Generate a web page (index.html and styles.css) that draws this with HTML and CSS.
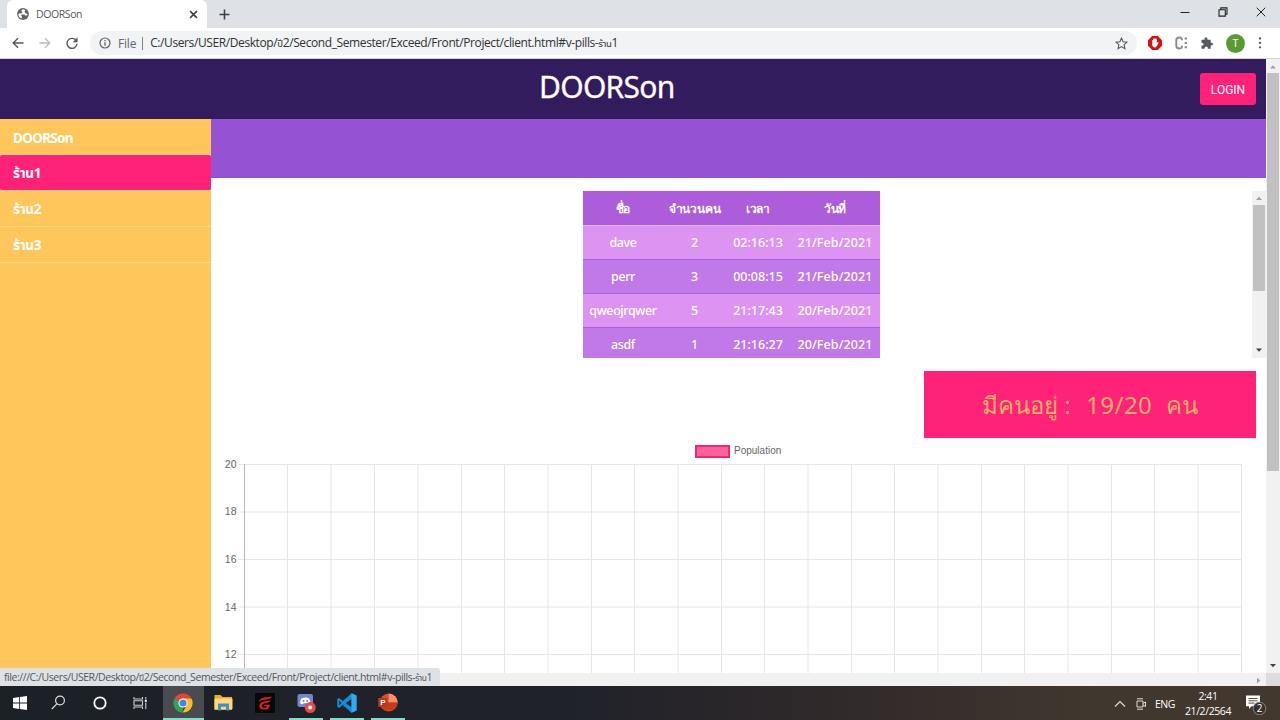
FILE: index.html
```html
<!DOCTYPE html>
<html lang="th">
<head>
<meta charset="utf-8">
<title>DOORSon</title>
<link rel="stylesheet" href="styles.css">
</head>
<body>
<div class="screen">
  <div class="tabstrip">
    <div class="tab">
      <svg class="globe" width="12" height="12" viewBox="0 0 12 12"><circle cx="6" cy="6" r="5.9" fill="#5f6368"/><path d="M6.6 1.2 5 1.6 4.3 3.2l1.2 1-.8 1.2-2-.2L1.3 6c0 2 1.2 3.800 3.200 4.500L5 8.800 4 7.600l.8-1.200h2.300l1.400 1.400 1.300-.3.9-1.500-2-.8L7.500 3.800l.9-1.600z" fill="#fff"/></svg>
      <span class="tab-title">DOORSon</span>
      <svg width="9" height="9" viewBox="0 0 8 8"><path d="M1 1l6 6M7 1L1 7" stroke="#3c4043" stroke-width="1.4"/></svg>
    </div>
    <svg class="newtab" width="11" height="11" viewBox="0 0 11 11"><path d="M5.500 .5v10M.5 5.500h10" stroke="#3c4043" stroke-width="1.600"/></svg>
    <div class="win-controls">
      <svg width="10" height="10" viewBox="0 0 10 10"><path d="M.5 5.500h9" stroke="#222"/></svg>
      <svg width="10" height="10" viewBox="0 0 10 10"><path d="M1 2.800h6.300v6.300H1zM2.800 2.800V.9h6.200v6.300H7.300" fill="none" stroke="#222" stroke-width="1.100"/></svg>
      <svg width="10" height="10" viewBox="0 0 10 10"><path d="M.7.7l8.600 8.600M9.300.7L.7 9.300" stroke="#222"/></svg>
    </div>
  </div>
  <div class="toolbar">
    <div class="nav-icons">
      <svg width="12" height="12" viewBox="0 0 12 12"><path d="M11.500 6H1.500M6 1.200L1.200 6 6 10.800" fill="none" stroke="#55585c" stroke-width="1.400"/></svg>
      <svg width="12" height="12" viewBox="0 0 12 12"><path d="M.5 6h10M6 1.200L10.800 6 6 10.800" fill="none" stroke="#b9bbbe" stroke-width="1.300"/></svg>
      <svg width="12" height="12" viewBox="0 0 12 12"><path d="M10.300 3.800A5 5 0 1 0 11 6.800" fill="none" stroke="#55585c" stroke-width="1.400"/><path d="M11.500.3v5H6.700z" fill="#55585c"/></svg>
    </div>
    <div class="omnibox">
      <svg width="12" height="12" viewBox="0 0 12 12"><circle cx="6" cy="6" r="5" fill="none" stroke="#5f6368" stroke-width="1.200"/><path d="M6 5.300v3.500M6 3v1.300" stroke="#5f6368" stroke-width="1.300"/></svg>
      <span class="scheme">File</span>
      <span class="url">C:/Users/USER/Desktop/<span class="thai small">ปี</span>2/Second_Semester/Exceed/Front/Project/client.html#v-pills-<span class="thai small">ร้าน</span>1</span>
      <svg class="star" width="13" height="13" viewBox="0 0 13 13"><path d="M6.500 1.100l1.600 3.600 3.900.4-2.900 2.600.8 3.900-3.400-2-3.400 2 .8-3.900L1 5.100l3.900-.4z" fill="none" stroke="#55585c" stroke-width="1.100"/></svg>
    </div>
    <div class="extensions">
      <svg width="14" height="14" viewBox="0 0 14 14"><path d="M4.200 0h5.600L14 4.200v5.600L9.800 14H4.200L0 9.800V4.200z" fill="#d9100f"/><path d="M4.200 7.200V4.300q.6-.7 1 0V3q.7-.8 1.200 0v-.6q.7-.8 1.200 0V3q.7-.7 1.200 0v4.200l1.100-1.100q.7 0 .8.700L8.900 10q-.8 1.500-2.300 1.500-2.100-.4-2.400-2.300z" fill="#fff"/></svg>
      <svg width="13" height="14" viewBox="0 0 13 14"><path d="M7 4.300V3.500Q7 1.500 4.200 1.500T1.300 4.200v5.600q0 2.700 2.900 2.700T7 10.500v-.8" fill="none" stroke="#8d8d8d" stroke-width="1.900"/><path d="M9.600 2.500H12M9.600 6.900H12M9.600 11.300H12" stroke="#8d8d8d" stroke-width="2"/></svg>
      <svg width="12" height="12" viewBox="0 0 12 12"><path d="M.5 2.800h3Q3.200.2 5 .2t1.500 2.600h3.200v3q2.300-.2 2.300 1.300T9.700 8.400v3.400H6.900Q7 9.600 5.300 9.600t-1.700 2.200H.5V8.800q2.200-.1 2.200-1.600T.5 5.700z" fill="#55585c"/></svg>
      <span class="avatar">T</span>
      <svg width="4" height="12" viewBox="0 0 4 12"><circle cx="2" cy="1.500" r="1.150" fill="#55585c"/><circle cx="2" cy="5.900" r="1.150" fill="#55585c"/><circle cx="2" cy="10.300" r="1.150" fill="#55585c"/></svg>
    </div>
  </div>
  <div class="viewport">
    <div class="page">
      <div class="header"><h1>DOORSon</h1><button class="login">LOGIN</button></div>
      <div class="body">
        <nav class="sidebar">
          <a class="item plain">DOORSon</a>
          <a class="item active thai">ร้าน1</a>
          <a class="item thai">ร้าน2</a>
          <a class="item thai">ร้าน3</a>
        </nav>
        <main class="content">
          <div class="banner"></div>
          <div class="table-wrap">
            <div class="table-area">
              <table>
                <thead><tr><th class="c1">ชื่อ</th><th class="c2">จำนวนคน</th><th class="c3">เวลา</th><th class="c4">วันที่</th></tr></thead>
                <tbody>
                  <tr><td class="name">dave</td><td>2</td><td>02:16:13</td><td class="date-cell">21/Feb/2021</td></tr>
                  <tr><td class="name">perr</td><td>3</td><td>00:08:15</td><td class="date-cell">21/Feb/2021</td></tr>
                  <tr><td class="name">qweojrqwer</td><td>5</td><td>21:17:43</td><td class="date-cell">20/Feb/2021</td></tr>
                  <tr><td class="name">asdf</td><td>1</td><td>21:16:27</td><td class="date-cell">20/Feb/2021</td></tr>
                </tbody>
              </table>
            </div>
            <div class="scrollbar inner">
              <svg width="14" height="14" viewBox="0 0 14 14"><path d="M4 9l3-3.300L10 9z" fill="#a0a0a0"/></svg>
              <div class="thumb"></div>
              <svg class="down" width="14" height="14" viewBox="0 0 14 14"><path d="M4 4.500l3 3.300 3-3.300z" fill="#404040"/></svg>
            </div>
          </div>
          <div class="status"><span class="s1">มีคนอยู่ :</span><span class="s2">19/20</span><span class="s3">คน</span></div>
          <div class="legend"><span class="swatch"></span><span>Population</span></div>
          <svg class="chart" width="1055" height="216" viewBox="211 458 1055 216">
            <path class="grid" d="M287.500 464v210M331 464v210M374.500 464v210M418 464v210M461.500 464v210M504.500 464v210M548 464v210M591.500 464v210M634.500 464v210M678 464v210M721.500 464v210M764.500 464v210M808 464v210M851.500 464v210M894.500 464v210M938 464v210M981.500 464v210M1024.500 464v210M1068 464v210M1111.500 464v210M1154.500 464v210M1198 464v210M1241.500 464v210M238 464.500h1003M238 512h1003M238 559.500h1003M238 607h1003M238 654.500h1003"/>
            <path class="axis" d="M244.500 464v210"/>
            <g class="ticks"><text x="236.500" y="467.500">20</text><text x="236.500" y="515">18</text><text x="236.500" y="563">16</text><text x="236.500" y="610.500">14</text><text x="236.500" y="658">12</text></g>
          </svg>
        </main>
      </div>
      <div class="hscroll"><svg width="14" height="13" viewBox="0 0 14 13"><path d="M5 4.500l3.300 3L5 10.500z" fill="#a0a0a0"/></svg></div>
    </div>
    <div class="scrollbar outer">
      <svg width="14" height="14" viewBox="0 0 14 14"><path d="M4 9.500l3-3.300 3 3.300z" fill="#a0a0a0"/></svg>
      <div class="thumb"></div>
      <svg class="down" width="14" height="14" viewBox="0 0 14 14"><path d="M4 5l3 3.300L10 5z" fill="#404040"/></svg>
      <div class="corner"></div>
    </div>
    <div class="link-status">file:///C:/Users/USER/Desktop/<span class="thai small">ปี</span>2/Second_Semester/Exceed/Front/Project/client.html#v-pills-<span class="thai small">ร้าน</span>1</div>
  </div>
  <div class="taskbar">
    <div class="task"><svg width="14" height="14" viewBox="0 0 14 14"><path d="M0 2l6.200-.9v5.500H0zM7 1l7-1v6.600H7zM0 7.400h6.200v5.500L0 12zM7 7.400h7V14l-7-1z" fill="#fff"/></svg></div>
    <div class="task"><svg width="15" height="15" viewBox="0 0 15 15"><circle cx="9" cy="5.500" r="4.400" fill="none" stroke="#ddd" stroke-width="1.200"/><path d="M5.800 8.800L.8 14" stroke="#ddd" stroke-width="1.200"/></svg></div>
    <div class="task"><svg width="14" height="14" viewBox="0 0 14 14"><circle cx="7" cy="7" r="5.700" fill="none" stroke="#fff" stroke-width="1.800"/></svg></div>
    <div class="task"><svg width="15" height="14" viewBox="0 0 15 14"><path d="M1 1v2h8.500V1M1 13v-2h8.500v2M1 4.800h8.500v4.400H1zM12.800 1v2.200M12.800 6.500V13" fill="none" stroke="#ccc" stroke-width="1.100"/><path d="M11.800 3.800h2v2h-2z" fill="#fff"/></svg></div>
    <div class="task current"><svg width="20" height="20" viewBox="0 0 20 20"><path d="M10 10L1.700 5.200A9.600 9.600 0 0 1 18.300 5.200z" fill="#e94335"/><path d="M10 10L1.700 5.200A9.600 9.600 0 0 0 9.700 19.600z" fill="#34a353"/><path d="M10 5.500h8.500A9.600 9.600 0 0 1 9.700 19.600L14 12z" fill="#fbc116"/><circle cx="10" cy="10" r="4.600" fill="#fff"/><circle cx="10" cy="10" r="3.600" fill="#4285f4"/></svg></div>
    <div class="task"><svg width="19" height="17" viewBox="0 0 19 17"><path d="M.5 1h6l2 2H18v13H.5z" fill="#e8ad2e"/><path d="M.5 4.500h18V15H.5z" fill="#ffda74"/><path d="M4 16.500v-7h11v7h-3v-3.700H7v3.700z" fill="#3c91d4"/></svg></div>
    <div class="task"><svg width="20" height="20" viewBox="0 0 20 20"><rect width="20" height="20" rx="1" fill="#070707"/><path d="M17 3.500Q13 4.200 9.500 4.500 5 5.200 3.200 9q3-2.200 6-2.300 5 0 7.800-3.200zM16 7q-3 1.300-6.500 1.300Q5 9.300 4.300 12.500 4 16 8.500 16.500h4.200l2.600-4.800H9.800l-.8 1.300h2.700l-.9 1.700H8.500q-2.500-1-1-3.200Q9 9.800 12 9.800q3-.3 4-2.800z" fill="#d71f27"/></svg></div>
    <div class="task open"><svg width="20" height="20" viewBox="0 0 20 20"><path d="M3.500 1h11.500q2 0 2 2v14.500L13.500 14h-10q-2 0-2-2V3q0-2 2-2z" fill="#7585cf"/><path d="M5.500 5.200q4-1.500 7.500 0 1.600 2.500 1.300 5-1.500 1.500-2.700 1l-.6-1H7.500l-.6 1Q5.500 11.700 4.200 10.200q0-3 1.300-5z" fill="#fff"/><circle cx="7.500" cy="8" r="1" fill="#7585cf"/><circle cx="11.200" cy="8" r="1" fill="#7585cf"/><circle cx="14.200" cy="14.500" r="5.500" fill="#e34b4f"/><circle cx="14.200" cy="14.500" r="2" fill="#fff"/></svg></div>
    <div class="task open"><svg width="20" height="20" viewBox="0 0 20 20"><path d="M14.500.3l5 2.300v15l-5 2.200L5.800 12 2 15 .3 14V6L2 5l3.800 3zM14.500 6L8.800 10l5.700 4.200zM2.300 7.700v4.600L4.500 10z" fill="#168bd2" fill-rule="evenodd"/><path d="M14.500.3l5 2.300v15l-5 2.200z" fill="#35a9ed"/></svg></div>
    <div class="task open"><svg width="20" height="19" viewBox="0 0 20 19"><circle cx="10.700" cy="9.500" r="9" fill="#d35230"/><path d="M10.700.5a9 9 0 0 1 9 9h-9z" fill="#ff8f6b"/><path d="M1.800 9.500h17.900a9 9 0 0 1-17.900 0z" fill="#c13b1c"/><rect x=".2" y="5" width="9" height="9" rx=".8" fill="#b9371d"/><text class="ppt" x="2.300" y="12.300">P</text></svg></div>
    <div class="tray">
      <svg width="12" height="12" viewBox="0 0 12 12"><path d="M1 8.500l5-5 5 5" fill="none" stroke="#ddd" stroke-width="1.200"/></svg>
      <svg class="meet" width="12" height="12" viewBox="0 0 12 12"><path d="M2 3h6v6H2zM8 5.300L10.500 4v4.500L8 7.200M2 .8h6M2 11.200h6" fill="none" stroke="#ddd" stroke-width="1"/></svg>
      <span class="lang">ENG</span>
      <div class="clock"><span>2:41</span><span class="date">21/2/2564</span></div>
      <svg class="notice" width="21" height="21" viewBox="0 0 21 21"><path d="M0 1.500h14v10.800H5.500L3 15v-2.700H0z" fill="#fff"/><path d="M2.500 4.500h9M2.500 6.800h9M2.500 9.100h6" stroke="#54483d" stroke-width="1"/><circle cx="13.500" cy="14.500" r="6.300" fill="#34302e" stroke="#888"/><text class="badge" x="10.700" y="18">2</text></svg>
    </div>
  </div>
</div>
</body>
</html>
```

FILE: styles.css
```css
* { box-sizing: border-box; }
body { margin: 0; font-family: "Open Sans", "Noto Sans", sans-serif; }
svg { display: block; flex: none; }
.thai { font-family: "Noto Sans", "Noto Sans Thai", "Noto Sans CJK SC", sans-serif; }
.small { font-size: .8em; line-height: 1; }
.screen { width: 1280px; height: 720px; overflow: hidden; display: flex; flex-direction: column; background: #fff; }

.tabstrip { height: 28px; flex: none; display: flex; align-items: center; background: #dee1e6; padding-left: 7px; }
.tab { width: 200px; height: 28px; display: flex; align-items: center; padding: 0 9px 0 10px; background: #fff; border-radius: 6px 6px 0 0; }
.tab-title { flex: 1; margin-left: 7px; font-size: 10.5px; letter-spacing: -.4px; color: #55585c; }
.newtab { margin-left: 12px; }
.win-controls { margin-left: auto; margin-right: 14px; display: flex; gap: 28px; padding-bottom: 4px; }

.toolbar { height: 31px; flex: none; display: flex; align-items: center; border-bottom: 1px solid #d4d2dc; padding-left: 12px; }
.nav-icons { display: flex; gap: 15px; width: 78px; }
.omnibox { width: 1047px; height: 24px; display: flex; align-items: center; background: #f1f3f4; border-radius: 12px; padding: 0 9px; font-size: 12px; color: #303235; white-space: nowrap; }
.scheme { margin-left: 7px; padding-right: 6px; border-right: 1px solid #80848a; line-height: 13px; color: #66696e; letter-spacing: -.2px; }
.url { margin-left: 7px; letter-spacing: -.4px; line-height: 18px; }
.star { margin-left: auto; }
.extensions { margin-left: 11px; display: flex; align-items: center; gap: 13px; }
.avatar { width: 19px; height: 19px; border-radius: 50%; background: #5c9a36; color: #fff; font: 10px/19px Roboto, sans-serif; text-align: center; }

.viewport { position: relative; height: 627px; flex: none; display: flex; }
.page { width: 1266px; display: flex; flex-direction: column; }
.header { height: 60px; flex: none; display: flex; align-items: center; justify-content: space-between; padding: 0 10px 0 540px; background: #331c5e; }
h1 { margin: 0 0 5px -1px; font: 400 30px/40px "Noto Sans", sans-serif; letter-spacing: -.72px; color: #fff; -webkit-text-stroke: .3px #fff; }
.login { width: 56px; height: 32px; padding: 1px 0 0; border: 0; border-radius: 3px; background: #ff2278; color: #fff; font: 12px Roboto, sans-serif; }
.body { height: 554px; flex: none; display: flex; overflow: hidden; }
.sidebar { width: 211px; flex: none; background: #ffc65c; }
.item { display: flex; align-items: center; height: 36px; padding: 2px 0 0 13px; color: #fff; font-size: 13.500px; font-weight: 700; border-bottom: 1px solid #ffd587; letter-spacing: -.3px; }
.plain { font-family: "Noto Sans", sans-serif; font-size: 13.500px; letter-spacing: -.7px; }
.active { background: #ff2278; border-radius: 2px; }
.content { width: 1055px; display: flex; flex-direction: column; }
.banner { height: 59px; flex: none; background: #9552d2; }
.table-wrap { height: 167px; flex: none; margin-top: 13px; display: flex; overflow: hidden; }
.table-area { flex: 1; display: flex; justify-content: center; overflow: hidden; }
table { width: 297px; height: 170px; table-layout: fixed; border-collapse: collapse; background: #c178e8; color: #fff; text-align: center; font-family: "Noto Sans", sans-serif; font-size: 12.500px; }
tr { height: 34px; }
th, td { padding: 2px 0 0; line-height: 20px; white-space: nowrap; }
th { background: #ad5ddb; border-bottom: 1px solid #e3b2f4; font-weight: 700; font-size: 12px; letter-spacing: -.2px; }
td { border-bottom: 1px solid #ae5fdb; font-weight: 500; }
.name { letter-spacing: -.4px; }
.date-cell { letter-spacing: .1px; }
tbody tr:nth-child(odd) { background: #dd93f1; }
.c1 { width: 80px; } .c2 { width: 63px; } .c3 { width: 64px; } .c4 { width: 90px; }

.scrollbar { width: 14px; flex: none; background: #f1f1f1; display: flex; flex-direction: column; align-items: center; }
.thumb { width: 12px; background: #c1c1c1; }
.inner .thumb { height: 86px; }
.outer .thumb { height: 398px; }
.down { margin-top: auto; }
.corner { width: 14px; height: 13px; background: #dcdcdc; }
.hscroll { height: 13px; flex: none; display: flex; justify-content: flex-end; background: #f1f1f1; }

.status { width: 332px; height: 67px; flex: none; margin: 13px 10px 0 auto; padding: 0 0 0 58px; display: flex; align-items: center; background: #ff2278; color: #f9b265; font: 24px/40px "Noto Sans", sans-serif; white-space: pre; }
.s1 { width: 104px; } .s2 { width: 80px; letter-spacing: .5px; }
.legend { height: 20px; flex: none; display: flex; align-items: center; gap: 4px; padding: 6px 0 0 484px; font: 10px/14px "Liberation Sans", sans-serif; color: #666; }
.swatch { width: 35px; height: 13px; border: 2px solid #ee2870; background: #ff619d; }
.grid { fill: none; stroke: #e6e6e6; }
.axis { stroke: #b6b6b6; }
.ticks { font: 10.500px "Liberation Sans", sans-serif; fill: #666; text-anchor: end; }

.link-status { position: absolute; left: 0; bottom: 0; width: 440px; height: 18px; padding-left: 4px; background: #dee1e6; border-radius: 0 3px 0 0; color: #54575b; font-size: 10.500px; line-height: 19px; letter-spacing: -.43px; white-space: nowrap; }

.taskbar { height: 34px; flex: none; display: flex; background: linear-gradient(90deg, #1c2027 0, #20222a 45%, #30292a 65%, #40372e 85%, #42382e 100%); }
.task { width: 41px; height: 34px; display: flex; align-items: center; justify-content: center; padding-top: 1px; padding-right: 2px; border-bottom: 2px solid transparent; }
.task:first-child { width: 40px; padding-right: 0; }
.task:nth-child(2), .task:nth-child(3), .task:nth-child(4) { padding-right: 4px; }
.current { background: #494b50; border-color: #83dbca; }
.open { background: linear-gradient(#83dbca, #83dbca) 3px bottom / 34px 2px no-repeat border-box; }
.ppt { font: bold 8px "Liberation Sans", sans-serif; fill: #fff; }
.tray { margin-left: auto; display: flex; align-items: center; padding: 2px 13px 0 0; color: #fff; font-size: 10.500px; }
.meet { margin-left: 9px; }
.lang { width: 20px; margin-left: 8px; letter-spacing: -.5px; }
.clock { width: 46px; margin-left: 10px; display: flex; flex-direction: column; align-items: center; line-height: 15px; letter-spacing: -.4px; }
.notice { margin-left: 15px; }
.badge { font: 10px "Open Sans", sans-serif; fill: #fff; }
```
